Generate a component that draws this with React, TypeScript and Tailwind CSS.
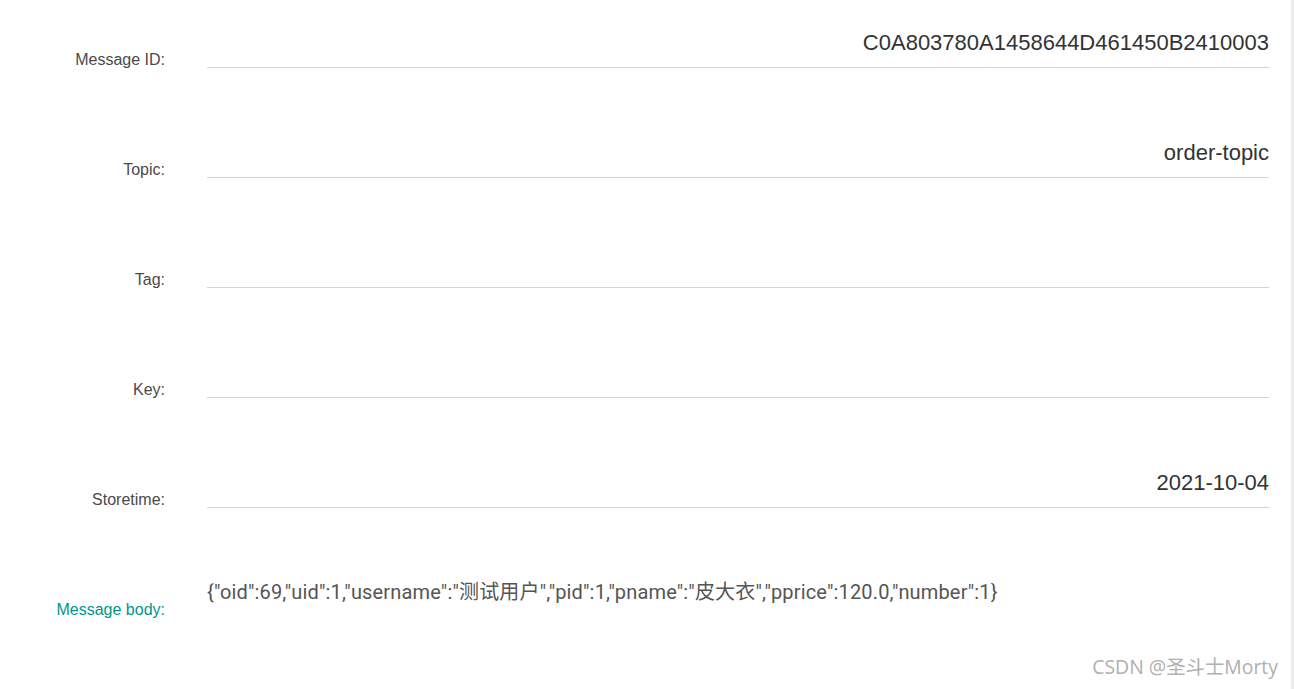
const rows = [
  { label: 'Message ID:', value: 'C0A803780A1458644D461450B2410003' },
  { label: 'Topic:', value: 'order-topic' },
  { label: 'Tag:', value: '' },
  { label: 'Key:', value: '' },
  { label: 'Storetime:', value: '2021-10-04' },
]

const body = '{"oid":69,"uid":1,"username":"测试用户","pid":1,"pname":"皮大衣","pprice":120.0,"number":1}'

export default function App() {
  return (
    <div className="relative flex h-[689px] w-[1294px] bg-white font-['Liberation_Sans',Arial,sans-serif]">
      <div className="flex flex-1 flex-col gap-[70px] pt-[28px] pr-[22px]">
        {rows.map((r) => (
          <div key={r.label} className="flex items-end gap-[42px]">
            <div className="w-[165px] text-right text-[16px] leading-[17px] text-[#4a4a4a]">{r.label}</div>
            <div className="h-[40px] flex-1 border-b border-[#d4d4d4] pt-[3px] text-right text-[22px] leading-[24px] text-[#333]">
              {r.value}
            </div>
          </div>
        ))}
        <div className="flex items-end gap-[42px]">
          <div className="w-[165px] text-right text-[16px] leading-[17px] text-[#009688]">Message body:</div>
          <div className="h-[40px] flex-1 pt-[2px] font-['Roboto','Noto_Sans_CJK_SC',sans-serif] text-[20px] leading-[24px] tracking-[0.16px] text-[#555]">
            {body}
          </div>
        </div>
      </div>
      <div className="w-[3px] bg-[#ececec]" />
      <div className="absolute right-[16px] bottom-[8px] font-['Open_Sans','Noto_Sans_CJK_SC',sans-serif] text-[19.4px] text-[#b0b0b0]">
        CSDN @圣斗士Morty
      </div>
    </div>
  )
}
